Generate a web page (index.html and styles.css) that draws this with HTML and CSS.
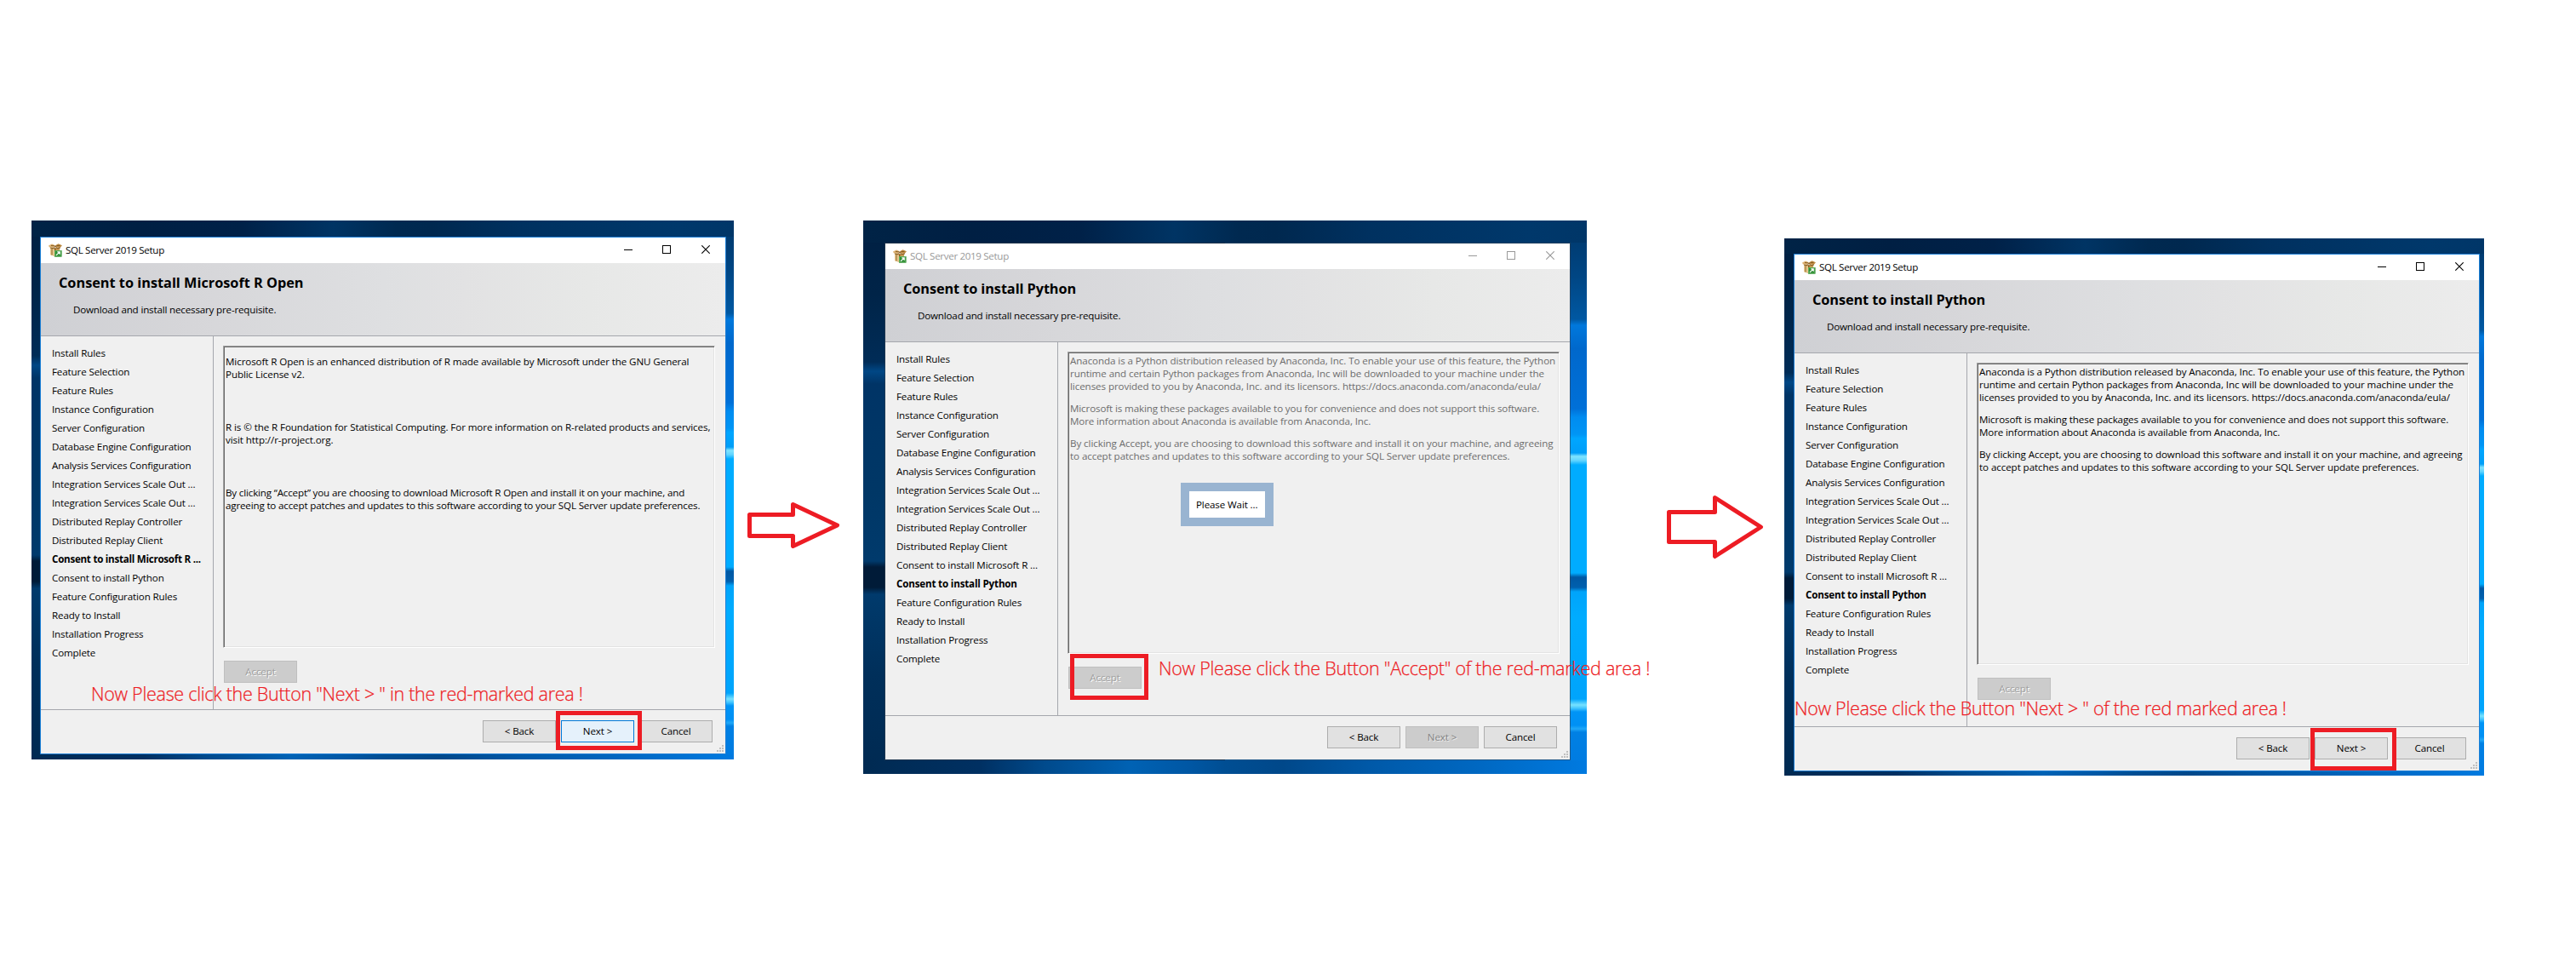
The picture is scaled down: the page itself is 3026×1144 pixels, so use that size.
FILE: index.html
```html
<!DOCTYPE html>
<html lang="en">
<head>
<meta charset="utf-8">
<title>SQL Server 2019 Setup</title>
<link rel="stylesheet" href="styles.css">
</head>
<body>
<svg class="defs" width="0" height="0" aria-hidden="true">
  <symbol id="setup-icon" viewBox="0 0 16 16">
    <path d="M2 5h11v9l-4 1.6L2 13z" fill="#c79a55"/>
    <path d="M2 5l5 1.5V15L2 13z" fill="#e6c68d"/>
    <path d="M4 6v7.5" stroke="#8f6527" stroke-width="1"/>
    <path d="M7 5.5h1.5V15H7z" fill="#8a5c20"/>
    <path d="M0 2.5L4 .5l4 1.8L5.5 5 1 4.6z" fill="#dcb171"/>
    <path d="M8 2.3L11.5.3 16 2.2 13.5 5 9 4.6z" fill="#c08d45"/>
    <path d="M3 2.5l4 .3M9.5 2.6l4-.3M2 5l4 .8 2-3 2 3 4-.8" stroke="#7d531c" stroke-width=".9" fill="none"/>
    <path d="M7 8h8.5v7.7H7z" fill="#2f8f35"/>
    <path d="M7.5 8.5h7.500v6.700h-7.500z" fill="none" stroke="#6fb86c" stroke-width=".8"/>
    <path d="M9 13.800l4-4M10.300 9.800h2.900v2.900" stroke="#fff" stroke-width="1.200" fill="none"/>
  </symbol>
  <symbol id="caption-buttons" viewBox="0 0 101 10">
    <path d="M0 5.5h10M45.500 .5h9v9h-9z" fill="none" stroke="currentColor" shape-rendering="crispEdges"/>
    <path d="M91.300 .3l9.400 9.400M100.700 .3l-9.400 9.400" fill="none" stroke="currentColor" stroke-width="1.100"/>
  </symbol>
  <symbol id="grip" viewBox="0 0 8 8">
    <path d="M6 0h2v2H6zM3 3h2v2H3zM6 3h2v2H6zM0 6h2v2H0zM3 6h2v2H3zM6 6h2v2H6z" fill="#bfbfbf"/>
  </symbol>
</svg>

<main class="steps">
  <section class="screen screen-r">
    <div class="window">
      <div class="titlebar">
        <svg class="app-icon"><use href="#setup-icon"/></svg>
        <span class="caption">SQL Server 2019 Setup</span>
        <svg class="controls"><use href="#caption-buttons"/></svg>
      </div>
      <header class="banner">
        <h1>Consent to install Microsoft R Open</h1>
        <p>Download and install necessary pre-requisite.</p>
      </header>
      <div class="content">
        <ul class="nav">
          <li>Install Rules</li>
          <li>Feature Selection</li>
          <li>Feature Rules</li>
          <li>Instance Configuration</li>
          <li>Server Configuration</li>
          <li>Database Engine Configuration</li>
          <li>Analysis Services Configuration</li>
          <li>Integration Services Scale Out ...</li>
          <li>Integration Services Scale Out ...</li>
          <li>Distributed Replay Controller</li>
          <li>Distributed Replay Client</li>
          <li class="current">Consent to install Microsoft R ...</li>
          <li>Consent to install Python</li>
          <li>Feature Configuration Rules</li>
          <li>Ready to Install</li>
          <li>Installation Progress</li>
          <li>Complete</li>
        </ul>
        <div class="page">
          <div class="license license-r">
            <p>Microsoft R Open is an enhanced distribution of R made available by Microsoft under the GNU General<br>Public License v2.</p>
            <p>R is © the R Foundation for Statistical Computing. For more information on R-related products and services,<br>visit http://r-project.org.</p>
            <p>By clicking “Accept” you are choosing to download Microsoft R Open and install it on your machine, and<br>agreeing to accept patches and updates to this software according to your SQL Server update preferences.</p>
          </div>
          <button class="btn accept" disabled>Accept</button>
        </div>
      </div>
      <footer class="actions">
        <button class="btn">&lt; Back</button>
        <button class="btn focused">Next &gt;</button>
        <button class="btn">Cancel</button>
        <svg class="grip"><use href="#grip"/></svg>
      </footer>
    </div>
    <div class="mark mark-next"></div>
    <p class="note">Now Please click the Button "Next &gt; " in the red-marked area !</p>
  </section>

  <svg class="arrow arrow-1" width="109" height="54" viewBox="878 590 109 54">
    <path d="M880.500 604.500H931.500V592.500L983.500 617L931.500 641.500V629.500H880.500Z"/>
  </svg>

  <section class="screen screen-wait">
    <div class="window inactive">
      <div class="titlebar">
        <svg class="app-icon"><use href="#setup-icon"/></svg>
        <span class="caption">SQL Server 2019 Setup</span>
        <svg class="controls"><use href="#caption-buttons"/></svg>
      </div>
      <header class="banner">
        <h1>Consent to install Python</h1>
        <p>Download and install necessary pre-requisite.</p>
      </header>
      <div class="content">
        <ul class="nav">
          <li>Install Rules</li>
          <li>Feature Selection</li>
          <li>Feature Rules</li>
          <li>Instance Configuration</li>
          <li>Server Configuration</li>
          <li>Database Engine Configuration</li>
          <li>Analysis Services Configuration</li>
          <li>Integration Services Scale Out ...</li>
          <li>Integration Services Scale Out ...</li>
          <li>Distributed Replay Controller</li>
          <li>Distributed Replay Client</li>
          <li>Consent to install Microsoft R ...</li>
          <li class="current">Consent to install Python</li>
          <li>Feature Configuration Rules</li>
          <li>Ready to Install</li>
          <li>Installation Progress</li>
          <li>Complete</li>
        </ul>
        <div class="page">
          <div class="license license-py">
            <p>Anaconda is a Python distribution released by Anaconda, Inc. To enable your use of this feature, the Python<br>runtime and certain Python packages from Anaconda, Inc will be downloaded to your machine under the<br>licenses provided to you by Anaconda, Inc. and its licensors. https://docs.anaconda.com/anaconda/eula/</p>
            <p>Microsoft is making these packages available to you for convenience and does not support this software.<br>More information about Anaconda is available from Anaconda, Inc.</p>
            <p>By clicking Accept, you are choosing to download this software and install it on your machine, and agreeing<br>to accept patches and updates to this software according to your SQL Server update preferences.</p>
          </div>
          <button class="btn accept" disabled>Accept</button>
        </div>
      </div>
      <footer class="actions">
        <button class="btn">&lt; Back</button>
        <button class="btn" disabled>Next &gt;</button>
        <button class="btn">Cancel</button>
        <svg class="grip"><use href="#grip"/></svg>
      </footer>
    </div>
    <div class="wait">Please Wait ...</div>
    <div class="mark mark-accept"></div>
    <p class="note">Now Please click the Button "Accept" of the red-marked area !</p>
  </section>

  <svg class="arrow arrow-2" width="114" height="74" viewBox="1958 582 114 74">
    <path d="M1960.500 601.500H2014.500V584.500L2068.500 619L2014.500 653.500V636.500H1960.500Z"/>
  </svg>

  <section class="screen screen-py">
    <div class="window">
      <div class="titlebar">
        <svg class="app-icon"><use href="#setup-icon"/></svg>
        <span class="caption">SQL Server 2019 Setup</span>
        <svg class="controls"><use href="#caption-buttons"/></svg>
      </div>
      <header class="banner">
        <h1>Consent to install Python</h1>
        <p>Download and install necessary pre-requisite.</p>
      </header>
      <div class="content">
        <ul class="nav">
          <li>Install Rules</li>
          <li>Feature Selection</li>
          <li>Feature Rules</li>
          <li>Instance Configuration</li>
          <li>Server Configuration</li>
          <li>Database Engine Configuration</li>
          <li>Analysis Services Configuration</li>
          <li>Integration Services Scale Out ...</li>
          <li>Integration Services Scale Out ...</li>
          <li>Distributed Replay Controller</li>
          <li>Distributed Replay Client</li>
          <li>Consent to install Microsoft R ...</li>
          <li class="current">Consent to install Python</li>
          <li>Feature Configuration Rules</li>
          <li>Ready to Install</li>
          <li>Installation Progress</li>
          <li>Complete</li>
        </ul>
        <div class="page">
          <div class="license license-py">
            <p>Anaconda is a Python distribution released by Anaconda, Inc. To enable your use of this feature, the Python<br>runtime and certain Python packages from Anaconda, Inc will be downloaded to your machine under the<br>licenses provided to you by Anaconda, Inc. and its licensors. https://docs.anaconda.com/anaconda/eula/</p>
            <p>Microsoft is making these packages available to you for convenience and does not support this software.<br>More information about Anaconda is available from Anaconda, Inc.</p>
            <p>By clicking Accept, you are choosing to download this software and install it on your machine, and agreeing<br>to accept patches and updates to this software according to your SQL Server update preferences.</p>
          </div>
          <button class="btn accept" disabled>Accept</button>
        </div>
      </div>
      <footer class="actions">
        <button class="btn">&lt; Back</button>
        <button class="btn">Next &gt;</button>
        <button class="btn">Cancel</button>
        <svg class="grip"><use href="#grip"/></svg>
      </footer>
    </div>
    <div class="mark mark-next"></div>
    <p class="note">Now Please click the Button "Next &gt; " of the red marked area !</p>
  </section>
</main>
</body>
</html>
```

FILE: styles.css
```css
* { box-sizing: border-box; margin: 0; padding: 0; }

body {
  width: 3026px;
  height: 1144px;
  overflow: hidden;
  background: #fff;
  color: #000;
  font-family: "Open Sans", "Noto Sans", sans-serif;
  font-size: 11.6px;
  letter-spacing: -0.13px;
  line-height: 15px;
}

.defs { position: absolute; }

.steps {
  display: flex;
  align-items: flex-start;
  padding: 259px 0 0 37px;
}

/* Desktop wallpaper: left and right strips, then top and bottom */
.screen {
  --top: 19px;
  --left: 10px;
  --right: 9px;
  --bottom: 6px;
  position: relative;
  flex: none;
  padding: var(--top) var(--right) var(--bottom) var(--left);
  background:
    linear-gradient(90deg, #002346 0%, #001f43 15%, #002148 30%, #003464 43%, #002950 52%, #00284f 57%, #003160 70%, #00386b 92%, #003668 100%) 0 0 / 100% var(--top) no-repeat,
    linear-gradient(90deg, #002a52 0%, #003062 16%, #004a8c 25%, #0062b4 37%, #0057a4 45%, #004e93 50%, #00488a 58%, #0059a8 70%, #0068c2 85%, #007ae0 100%) 0 100% / 100% var(--bottom) no-repeat,
    linear-gradient(180deg, #001f42 0, #002448 calc(var(--top) + 60px), #002c57 calc(var(--top) + 140px), #004785 calc(var(--top) + 151px), #003466 calc(var(--top) + 166px), #003766 calc(var(--top) + 290px), #003a6c calc(var(--top) + 374px), #001b38 calc(var(--top) + 381px), #001b38 calc(var(--top) + 405px), #003a6c calc(var(--top) + 413px), #002f5a 82%, #002a52 100%) 0 0 / 50% 100% no-repeat,
    linear-gradient(180deg, #003668 0, #004684 calc(var(--top) + 40px), #0058a2 calc(var(--top) + 90px), #0078dc calc(var(--top) + 97px), #0068cc calc(var(--top) + 125px), #0070d8 calc(var(--top) + 195px), #008cf0 calc(var(--top) + 205px), #0095f5 calc(var(--top) + 225px), #00a6ff calc(var(--top) + 230px), #009ef8 calc(var(--top) + 247px), #80e4ff calc(var(--top) + 251px), #60d4ff calc(var(--top) + 256px), #00acff calc(var(--top) + 261px), #00acff calc(var(--top) + 388px), #0058a4 calc(var(--top) + 393px), #0060ae calc(var(--top) + 405px), #00a4fa calc(var(--top) + 410px), #00acff calc(var(--top) + 440px), #00a4fc calc(var(--top) + 536px), #78e2ff calc(var(--top) + 543px), #40c4ff calc(var(--top) + 547px), #0094f6 calc(var(--top) + 551px), #0090f4 calc(var(--top) + 567px), #20a8f8 calc(var(--top) + 571px), #0080e4 calc(var(--top) + 575px), #007ae0 100%) 100% 0 / 50% 100% no-repeat;
}

.screen-wait { --top: 26px; --left: 25px; --right: 19px; --bottom: 16px; margin-left: 27px; }
.screen-py { --top: 18px; --left: 11px; --right: 5px; --bottom: 5px; margin: 21px 0 0 24px; }

.window {
  display: flex;
  flex-direction: column;
  width: 806px;
  height: 608px;
  border: 1px solid #1a7fd6;
  background: #f0f0f0;
}
.window.inactive { border-color: rgba(50, 65, 80, .6); background-clip: padding-box; }

.titlebar {
  display: flex;
  align-items: center;
  height: 30px;
  padding: 0 18px 0 9px;
  background: #fff;
}
.app-icon { width: 16px; height: 16px; margin-right: 4px; }
.caption { flex: 1; margin-top: -2px; letter-spacing: -0.33px; }
.controls { width: 101px; height: 10px; margin-top: -2px; }
.inactive .caption, .inactive .controls { color: #999; }

.banner {
  height: 86px;
  padding: 11px 21px;
  border-bottom: 1px solid #a5a7ad;
  background: linear-gradient(90deg, #cfd0d4, #d6d6d9 22%, #dedfe1 50%, #e2e2e3 62%, #e7e8e7 80%, #ececec);
}
.banner h1 { font-size: 16.300px; line-height: 24px; letter-spacing: 0; }
.screen-wait h1, .screen-py h1 { letter-spacing: -0.08px; }
.banner p { margin: 12px 0 0 17px; letter-spacing: -0.17px; }

.content { display: flex; height: 439px; border-bottom: 1px solid #a5a7ad; }
.nav {
  width: 203px;
  padding: 9px 0 0 13px;
  border-right: 1px solid #a5a7ad;
  list-style: none;
  line-height: 22px;
  white-space: nowrap;
}
.nav .current { font-weight: 700; letter-spacing: -0.26px; }
.screen-wait .current, .screen-py .current { letter-spacing: -0.17px; }

.page { flex: 1; padding: 11px 12px 0 11px; }
.license {
  height: 355px;
  border: 1px solid;
  border-color: #a0a0a0 #fff #fff #a0a0a0;
  box-shadow: inset 1px 1px #696969, inset -1px -1px #e3e3e3;
  white-space: nowrap;
}
.license-r { padding: 10px 2px; letter-spacing: -0.09px; }
.license-r p + p { margin-top: 47px; }
.license-r p:last-child { letter-spacing: -0.16px; }
.license-py { padding: 2px; letter-spacing: -0.08px; }
.license-py p + p { margin-top: 11px; }
.license-py p:nth-child(2) { letter-spacing: -0.12px; }
.inactive .license { color: #6d6d6d; }

.btn {
  width: 86px;
  height: 26px;
  border: 1px solid #adadad;
  background: #e1e1e1;
  color: #000;
  font: inherit;
  letter-spacing: inherit;
  line-height: 24px;
  text-align: center;
}
.btn:disabled { border-color: #bfbfbf; background: #ccc; color: #838383; text-shadow: 1px 1px #eee; }
.btn.accept { display: block; margin: 15px 0 0 1px; color: #a0a0a0; text-shadow: 1px 1px #fff; }
.btn.focused { border-color: #0078d7; background: #e5f1fb; }

.actions {
  position: relative;
  display: flex;
  justify-content: flex-end;
  gap: 6px;
  height: 51px;
  padding: 12px 15px 0 0;
}
.grip { position: absolute; right: 2px; bottom: 2px; width: 8px; height: 8px; }

.arrow { flex: none; overflow: visible; }
.arrow path { fill: none; stroke: #ed1c24; stroke-width: 5px; stroke-linejoin: round; }
.arrow-1 { margin: 331px 0 0 16px; }
.arrow-2 { margin: 323px 0 0 94px; }

/* Annotations drawn over the screens */
.mark { position: absolute; border: 5px solid #ed1c24; }
.screen-r .mark { left: 616px; top: 576px; width: 101px; height: 46px; }
.screen-wait .mark { left: 243px; top: 509px; width: 92px; height: 54px; }
.screen-py .mark { left: 618px; top: 575px; width: 101px; height: 50px; }

.note {
  position: absolute;
  color: #ed1c24;
  font-size: 21.500px;
  font-weight: 300;
  line-height: 30px;
  letter-spacing: -0.28px;
  white-space: pre;
  -webkit-text-stroke: 0.25px #ed1c24;
}
.screen-r .note { left: 70px; top: 541px; }
.screen-wait .note { left: 347px; top: 511px; z-index: 1; letter-spacing: -0.26px; }
.screen-py .note { left: 12px; top: 537px; }

.wait {
  position: absolute;
  left: 373px;
  top: 308px;
  width: 109px;
  height: 51px;
  border: 10px solid #99b4d1;
  background: #fff;
  line-height: 31px;
  padding-left: 8px;
  white-space: nowrap;
}
```
